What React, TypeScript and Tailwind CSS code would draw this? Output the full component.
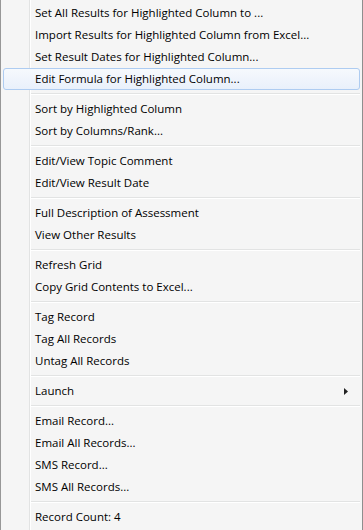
import React from "react";

type Entry = { label: string; submenu?: boolean; active?: boolean } | "sep";

const entries: Entry[] = [
  { label: "Set All Results for Highlighted Column to ..." },
  { label: "Import Results for Highlighted Column from Excel..." },
  { label: "Set Result Dates for Highlighted Column..." },
  { label: "Edit Formula for Highlighted Column...", active: true },
  "sep",
  { label: "Sort by Highlighted Column" },
  { label: "Sort by Columns/Rank..." },
  "sep",
  { label: "Edit/View Topic Comment" },
  { label: "Edit/View Result Date" },
  "sep",
  { label: "Full Description of Assessment" },
  { label: "View Other Results" },
  "sep",
  { label: "Refresh Grid" },
  { label: "Copy Grid Contents to Excel..." },
  "sep",
  { label: "Tag Record" },
  { label: "Tag All Records" },
  { label: "Untag All Records" },
  "sep",
  { label: "Launch", submenu: true },
  "sep",
  { label: "Email Record..." },
  { label: "Email All Records..." },
  { label: "SMS Record..." },
  { label: "SMS All Records..." },
  "sep",
  { label: "Record Count: 4" },
];

const MenuItem = ({
  label,
  submenu,
  active,
}: {
  label: string;
  submenu?: boolean;
  active?: boolean;
}) => {
  return (
    <div
      className={
        "mx-[2px] h-[22px] flex items-center pl-[31px] pr-[10px] rounded-[3px] border " +
        (active
          ? "border-[#aeccf1] bg-[linear-gradient(to_bottom,#f6f9fd,#e9f0fb)]"
          : "border-transparent")
      }
    >
      <span className="flex-1 whitespace-nowrap">{label}</span>
      {submenu && (
        <svg width="4" height="7" viewBox="0 0 4 7" className="mr-[1px]">
          <path d="M0 0 L4 3.5 L0 7 Z" fill="#222" />
        </svg>
      )}
    </div>
  );
};

const Separator = () => (
  <div className="h-[8px] flex flex-col justify-center ml-[30px] mr-[2px]">
    <div className="h-px bg-[#e2e3e3]" />
    <div className="h-px bg-white" />
  </div>
);

export default function App() {
  return (
    <div
      className="w-[363px] h-[540px] overflow-hidden bg-[#f5f5f5] border-l border-l-[#979797] border-r border-r-[#8e8e8e] pt-[2px] text-[11.5px] text-black bg-[linear-gradient(to_right,#f5f5f5_28px,#e2e3e3_28px,#e2e3e3_29px,#ffffff_29px,#ffffff_30px,#f5f5f5_30px)]"
      style={{ fontFamily: '"Open Sans", "Noto Sans", sans-serif' }}
    >
      {entries.map((e, i) =>
        e === "sep" ? (
          <Separator key={i} />
        ) : (
          <MenuItem key={i} label={e.label} submenu={e.submenu} active={e.active} />
        )
      )}
    </div>
  );
}
